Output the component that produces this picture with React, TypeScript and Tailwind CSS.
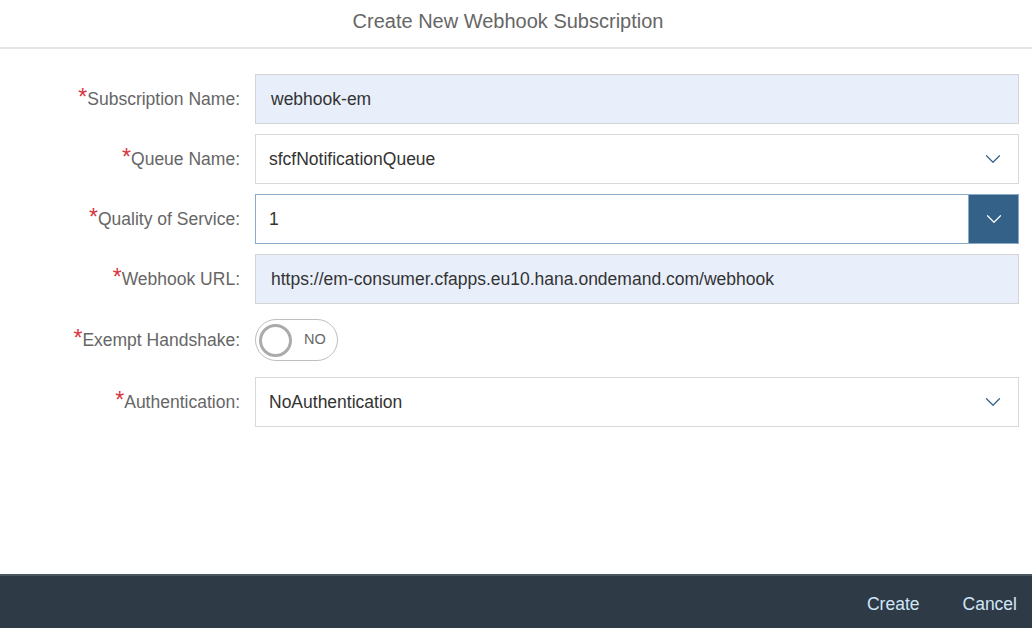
import { ChevronDown } from "lucide-react";

function Label({ text }: { text: string }) {
  return (
    <div className="w-[242px] shrink-0 pr-[2px] text-right text-[17.5px] text-[#666666]">
      <span className="text-[23px] leading-none text-[#d9363e]">*</span>
      {text}:
    </div>
  );
}

function Row({ label, children, className = "" }: { label: string; children: React.ReactNode; className?: string }) {
  return (
    <div className={`flex items-center ${className}`}>
      <Label text={label} />
      <div className="ml-[13px] w-[764px]">{children}</div>
    </div>
  );
}

function TextField({ value }: { value: string }) {
  return (
    <div className="flex h-[50px] items-center border border-[#d4d4d4] bg-[#e8effb] pl-[15px] text-[17.5px] text-[#333333]">
      {value}
    </div>
  );
}

function Select({ value, focused = false }: { value: string; focused?: boolean }) {
  if (focused) {
    return (
      <div className="flex h-[50px] items-stretch border border-[#8aaac8] bg-white text-[17.5px] text-[#333333]">
        <div className="flex flex-1 items-center pl-[13px]">{value}</div>
        <div className="flex w-[50px] items-center justify-center border-l border-[#8aaac8] bg-[#346187]">
          <ChevronDown size={26} strokeWidth={1.1} className="text-white" />
        </div>
      </div>
    );
  }
  return (
    <div className="flex h-[50px] items-center border border-[#d9d9d9] bg-white pl-[13px] text-[17.5px] text-[#333333]">
      <div className="flex-1">{value}</div>
      <div className="flex w-[50px] items-center justify-center">
        <ChevronDown size={26} strokeWidth={1.1} className="text-[#346187]" />
      </div>
    </div>
  );
}

export default function App() {
  return (
    <div className="flex h-[628px] w-[1032px] flex-col bg-white font-['Liberation_Sans',Arial,sans-serif]">
      <header className="flex h-[49px] shrink-0 items-center justify-center border-b-2 border-[#e5e5e5] pb-[5px] pr-[16px] text-[20px] text-[#666666]">
        Create New Webhook Subscription
      </header>
      <main className="flex flex-1 flex-col gap-[10px] pt-[25px]">
        <Row label="Subscription Name">
          <TextField value="webhook-em" />
        </Row>
        <Row label="Queue Name">
          <Select value="sfcfNotificationQueue" />
        </Row>
        <Row label="Quality of Service">
          <Select value="1" focused />
        </Row>
        <Row label="Webhook URL">
          <TextField value="https://em-consumer.cfapps.eu10.hana.ondemand.com/webhook" />
        </Row>
        <Row label="Exempt Handshake" className="mt-[5px]">
          <div className="flex h-[42px] w-[83px] items-center rounded-full border border-[#bfbfbf] bg-white pl-[3px]">
            <div className="h-[33px] w-[33px] rounded-full border-[3px] border-[#ababab] bg-white" />
            <span className="ml-[12px] text-[14.5px] text-[#666666]">NO</span>
          </div>
        </Row>
        <Row label="Authentication" className="mt-[6px]">
          <Select value="NoAuthentication" />
        </Row>
      </main>
      <footer className="flex h-[54px] shrink-0 items-center justify-end gap-[43px] border-t-2 border-[#4b5661] bg-[#2e3a46] pr-[15px] pt-[4px] text-[17.5px] text-[#d1e6f7]">
        <span>Create</span>
        <span>Cancel</span>
      </footer>
    </div>
  );
}
